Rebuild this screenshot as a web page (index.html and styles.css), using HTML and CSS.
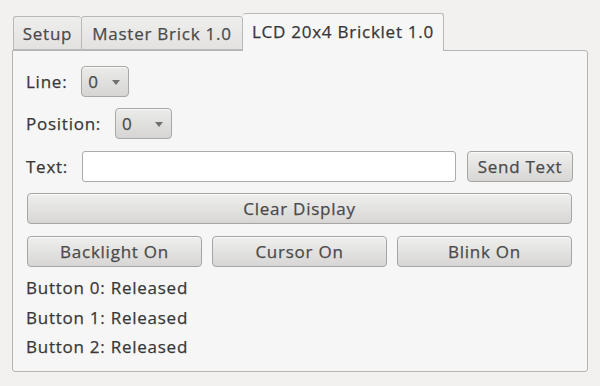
FILE: index.html
```html
<!DOCTYPE html>
<html>
<head>
<meta charset="utf-8">
<link rel="stylesheet" href="styles.css">
</head>
<body>
<div class="window">
  <div class="tabs">
    <div class="tab tab-setup">Setup</div>
    <div class="tab tab-master">Master Brick 1.0</div>
    <div class="tab tab-active">LCD 20x4 Bricklet 1.0</div>
  </div>
  <div class="panel">
    <div class="row">
      <span class="label">Line:</span>
      <div class="combo combo-line"><span class="combo-val">0</span><span class="arrow"></span></div>
    </div>
    <div class="row">
      <span class="label">Position:</span>
      <div class="combo combo-pos"><span class="combo-val">0</span><span class="arrow"></span></div>
    </div>
    <div class="row">
      <span class="label">Text:</span>
      <div class="input"></div>
      <div class="btn btn-send">Send Text</div>
    </div>
    <div class="row">
      <div class="btn btn-wide">Clear Display</div>
    </div>
    <div class="row row-three">
      <div class="btn">Backlight On</div>
      <div class="btn">Cursor On</div>
      <div class="btn">Blink On</div>
    </div>
    <div class="status">
      <div class="status-line">Button 0: Released</div>
      <div class="status-line">Button 1: Released</div>
      <div class="status-line">Button 2: Released</div>
    </div>
  </div>
</div>
</body>
</html>
```
FILE: styles.css
```css
html, body {
  margin: 0;
  padding: 0;
  background: #f2f1f0;
  width: 600px;
  height: 386px;
  overflow: hidden;
}
body {
  font-family: "Open Sans", "DejaVu Sans", sans-serif;
  font-size: 17px;
  letter-spacing: 0.75px;
  color: #383838;
  -webkit-text-stroke: 0.25px currentColor;
}
.window {
  padding: 13px 0 0 12px;
  width: 576px;
}
.tabs {
  display: flex;
  align-items: flex-end;
  height: 38px;
  padding-left: 1px;
  position: relative;
  z-index: 2;
}
.tab {
  box-sizing: border-box;
  height: 34px;
  border: 1px solid #b9b8b7;
  border-radius: 3px 3px 0 0;
  background: linear-gradient(#eeeeed, #e3e2e1);
  color: #4a4a4a;
  display: flex;
  align-items: center;
  justify-content: center;
  margin-bottom: 1px;
}
.tab-setup { width: 68px; border-right: none; }
.tab-master { width: 162px; }
.tab-active {
  width: 201px;
  height: 38px;
  margin-bottom: 0;
  border-bottom: none;
  border-left: none;
  background: #f6f6f6;
  color: #363636;
  padding-bottom: 2px;
}
.panel {
  box-sizing: border-box;
  width: 576px;
  height: 322px;
  margin-top: -1px;
  border: 1px solid #b5b4b3;
  border-radius: 0 3px 3px 3px;
  background: #f6f6f6;
  padding: 15px 14px 0 14px;
  display: flex;
  flex-direction: column;
  gap: 11px;
}
.row {
  display: flex;
  align-items: center;
  height: 31px;
}
.row:nth-child(3), .row:nth-child(5) { margin-top: 1px; }
.label {
  margin-right: 14px;
  margin-left: -1px;
}
.combo {
  box-sizing: border-box;
  height: 31px;
  border: 1px solid #a9a8a7;
  border-radius: 4px;
  background: linear-gradient(#ebebea, #d6d5d4);
  display: flex;
  align-items: center;
  padding-left: 6px;
  box-shadow: inset 0 1px 0 rgba(255,255,255,0.6);
}
.combo-line { width: 48px; }
.combo-pos { width: 57px; }
.combo-val { color: #4a4a4a; }
.arrow {
  width: 0;
  height: 0;
  border-left: 4px solid transparent;
  border-right: 4px solid transparent;
  border-top: 5px solid #707070;
  margin-left: auto;
  margin-right: 8px;
  margin-top: 2px;
}
.input {
  box-sizing: border-box;
  flex: 1;
  height: 31px;
  background: #ffffff;
  border: 1px solid #acabaa;
  border-radius: 3px;
}
.btn {
  box-sizing: border-box;
  height: 31px;
  border: 1px solid #a6a5a4;
  border-radius: 4px;
  background: linear-gradient(#efefee, #d7d6d5);
  box-shadow: inset 0 1px 0 rgba(255,255,255,0.7);
  display: flex;
  align-items: center;
  justify-content: center;
  color: #4a4a4a;
}
.btn-send {
  width: 106px;
  margin-left: 11px;
}
.btn-wide { width: 545px; }
.row-three { gap: 10px; }
.row-three .btn { width: 175px; }
.status {
  margin-top: -5px;
  display: flex;
  flex-direction: column;
}
.status-line {
  height: 29.5px;
  line-height: 29.5px;
  margin-left: -1px;
}
```
